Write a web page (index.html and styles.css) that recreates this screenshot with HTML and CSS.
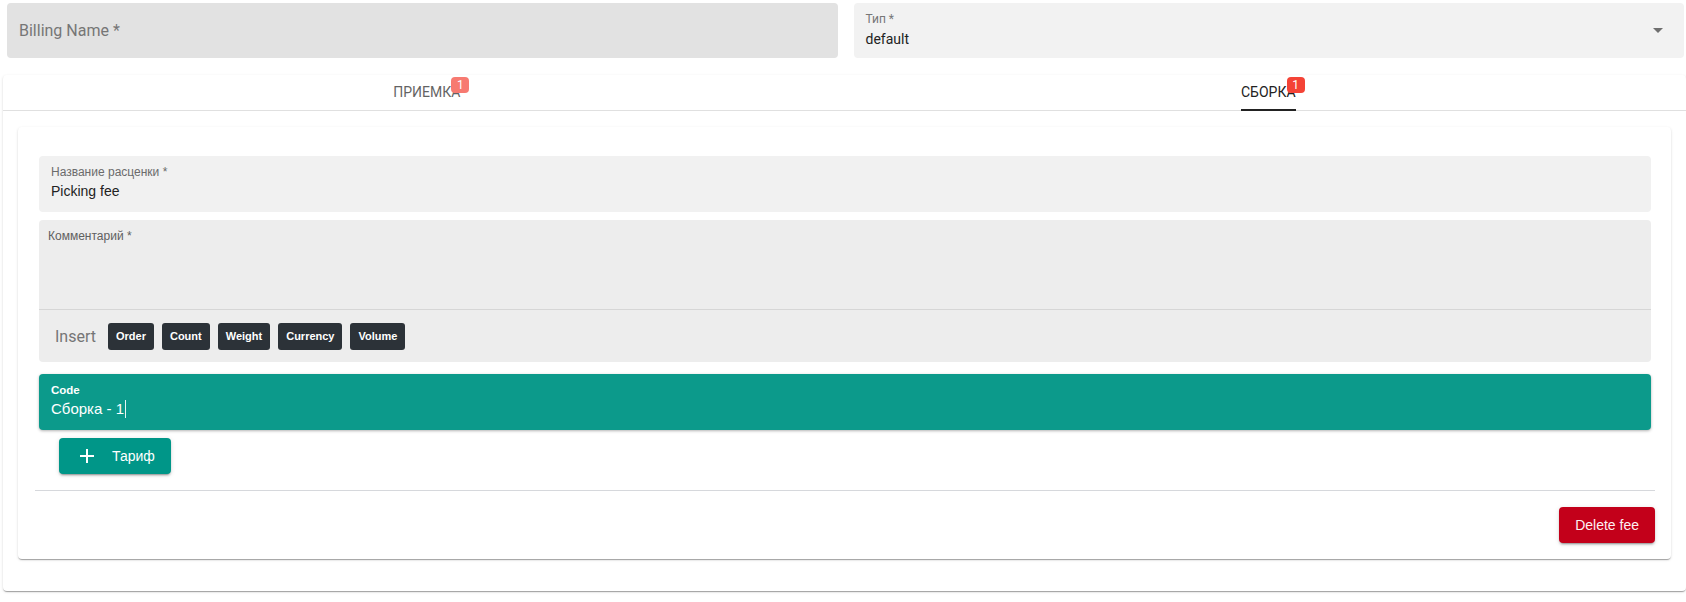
FILE: index.html
```html
<!DOCTYPE html>
<html lang="ru">
<head>
<meta charset="utf-8">
<title>Billing</title>
<link rel="stylesheet" href="styles.css">
</head>
<body>
<div class="page">
  <div class="top-row">
    <div class="field field-billing"><span class="placeholder">Billing Name *</span></div>
    <div class="field field-select">
      <div class="select-text">
        <div class="select-label">Тип *</div>
        <div class="select-value">default</div>
      </div>
      <svg class="select-arrow" width="24" height="24" viewBox="0 0 24 24"><path d="M7 10l5 5 5-5z"/></svg>
    </div>
  </div>

  <div class="outer-card">
    <div class="tabs">
      <div class="tab tab-inactive">
        <div class="tab-inner"><span class="tab-text">ПРИЕМКА<span class="badge">1</span></span></div>
      </div>
      <div class="tab tab-active">
        <div class="tab-inner"><span class="tab-text">СБОРКА<span class="badge">1</span></span></div>
      </div>
    </div>

    <div class="inner-card">
      <div class="fee-fields">
        <div class="text-field">
          <div class="tf-label">Название расценки *</div>
          <div class="tf-value">Picking fee</div>
        </div>

        <div class="comment-field">
          <div class="comment-area">
            <div class="comment-label">Комментарий *</div>
          </div>
          <div class="insert-row">
            <span class="insert-label">Insert</span>
            <span class="chip">Order</span>
            <span class="chip">Count</span>
            <span class="chip">Weight</span>
            <span class="chip">Currency</span>
            <span class="chip">Volume</span>
          </div>
        </div>

        <div class="code-field">
          <div class="code-label">Code</div>
          <div class="code-value">Сборка - 1<span class="caret"></span></div>
        </div>

        <button class="btn-tariff" type="button">
          <svg width="24" height="24" viewBox="0 0 24 24"><path d="M19 13h-6v6h-2v-6H5v-2h6V5h2v6h6v2z"/></svg>
          <span>Тариф</span>
        </button>
      </div>

      <div class="divider"></div>

      <div class="card-footer">
        <button class="btn-delete" type="button">Delete fee</button>
      </div>
    </div>
  </div>
</div>
</body>
</html>
```

FILE: styles.css
```css
* {
  box-sizing: border-box;
}

html,
body {
  margin: 0;
  padding: 0;
  background: #ffffff;
}

body {
  width: 1686px;
  height: 602px;
  overflow: hidden;
  font-family: Roboto, "Liberation Sans", Arial, sans-serif;
  color: #222222;
}

.page {
  padding: 3px 0 0 3px;
}

/* ---------- top row ---------- */
.top-row {
  display: grid;
  grid-template-columns: 1fr 1fr;
  gap: 16px;
  padding: 0 2px 0 4px;
}

.field {
  height: 55px;
  border-radius: 4px;
}

.field-billing {
  display: flex;
  align-items: center;
  padding-left: 12px;
  background: #e2e2e2;
  font-size: 16px;
  color: #767676;
}

.field-select {
  display: flex;
  align-items: flex-start;
  padding: 9px 12px 0 12px;
  background: #f2f2f2;
}

.select-text {
  flex: 1;
}

.select-label {
  font-size: 12px;
  line-height: 14px;
  color: #777777;
}

.select-value {
  margin-top: 4px;
  font-size: 14px;
  line-height: 18px;
  color: #222222;
}

.select-arrow {
  margin-top: 6px;
  margin-right: 2px;
  fill: rgba(0, 0, 0, 0.54);
}

/* ---------- outer card / tabs ---------- */
.outer-card {
  margin-top: 17px;
  padding-bottom: 32px;
  background: #ffffff;
  border-radius: 4px;
  box-shadow: 0 2px 1px -1px rgba(0, 0, 0, 0.2), 0 1px 1px 0 rgba(0, 0, 0, 0.14), 0 1px 3px 0 rgba(0, 0, 0, 0.12);
}

.tabs {
  display: flex;
  height: 36px;
  box-shadow: inset 0 -1px 0 #e0e0e0;
}

.tab {
  flex: 1;
  display: flex;
  justify-content: center;
}

.tab-inner {
  display: flex;
  align-items: center;
  margin-left: 6px;
  border-bottom: 2px solid transparent;
}

.tab-active .tab-inner {
  border-bottom-color: #222222;
}

.tab-inactive .tab-inner {
  opacity: 0.7;
}

.tab-text {
  position: relative;
  font-size: 14px;
  line-height: 16px;
  color: #222222;
}

.badge {
  position: absolute;
  top: 1px;
  right: 0;
  transform: translate(50%, -50%);
  min-width: 18px;
  height: 16px;
  padding: 0 5px;
  border-radius: 4px;
  background: #f44336;
  color: #ffffff;
  font-size: 12px;
  line-height: 16px;
  text-align: center;
}

/* ---------- inner card ---------- */
.inner-card {
  margin: 16px 15px 0 15px;
  padding: 29px 16px 16px 17px;
  background: #ffffff;
  border-radius: 4px;
  box-shadow: 0 2px 1px -1px rgba(0, 0, 0, 0.2), 0 1px 1px 0 rgba(0, 0, 0, 0.14), 0 1px 3px 0 rgba(0, 0, 0, 0.12);
}

.fee-fields {
  display: flex;
  flex-direction: column;
  padding: 0 4px;
}

.text-field {
  height: 56px;
  padding: 9px 12px 0 12px;
  border-radius: 4px;
  background: #f1f1f1;
}

.tf-label {
  font-family: "Liberation Sans", Arial, sans-serif;
  font-size: 12px;
  line-height: 14px;
  color: #6b6b6b;
}

.tf-value {
  margin-top: 3px;
  font-family: "Liberation Sans", Arial, sans-serif;
  font-size: 14px;
  line-height: 18px;
  color: #222222;
}

.comment-field {
  margin-top: 8px;
  border-radius: 4px;
  background: #ededed;
}

.comment-area {
  height: 89px;
  padding: 9px 9px;
}

.comment-label {
  font-family: "Liberation Sans", Arial, sans-serif;
  font-size: 12px;
  line-height: 14px;
  color: #606060;
}

.insert-row {
  display: flex;
  align-items: center;
  gap: 8px;
  height: 53px;
  padding-left: 16px;
  border-top: 1px solid #d6d6d6;
}

.insert-label {
  margin-right: 4px;
  font-size: 16px;
  color: #757575;
}

.chip {
  display: inline-flex;
  align-items: center;
  height: 27px;
  padding: 0 8px;
  border-radius: 3px;
  background: #2c3238;
  color: #ffffff;
  font-family: "Liberation Sans", Arial, sans-serif;
  font-size: 11px;
  font-weight: bold;
}

.code-field {
  margin-top: 12px;
  height: 56px;
  padding: 9px 12px 0 12px;
  border-radius: 4px;
  background: #0c9a8b;
  box-shadow: 0 1px 3px rgba(0, 0, 0, 0.3);
  color: #ffffff;
}

.code-label {
  font-family: "Liberation Sans", Arial, sans-serif;
  font-size: 11.5px;
  font-weight: bold;
  line-height: 14px;
}

.code-value {
  display: flex;
  align-items: center;
  margin-top: 3px;
  font-family: "Liberation Sans", Arial, sans-serif;
  font-size: 15px;
  line-height: 18px;
}

.caret {
  display: inline-block;
  width: 1px;
  height: 18px;
  margin-left: 1px;
  background: rgba(255, 255, 255, 0.9);
}

.btn-tariff {
  align-self: flex-start;
  display: flex;
  align-items: center;
  height: 36px;
  margin-top: 8px;
  margin-left: 20px;
  padding: 0 16px;
  border: none;
  border-radius: 4px;
  background: #009688;
  color: #ffffff;
  font-family: "Liberation Sans", Arial, sans-serif;
  font-size: 14px;
  box-shadow: 0 3px 1px -2px rgba(0, 0, 0, 0.2), 0 2px 2px 0 rgba(0, 0, 0, 0.14), 0 1px 5px 0 rgba(0, 0, 0, 0.12);
}

.btn-tariff svg {
  fill: #ffffff;
  margin-right: 13px;
}

.divider {
  height: 1px;
  margin-top: 16px;
  background: #d6d8dc;
}

.card-footer {
  display: flex;
  justify-content: flex-end;
  margin-top: 16px;
}

.btn-delete {
  height: 36px;
  padding: 0 16px;
  border: none;
  border-radius: 4px;
  background: #c3001a;
  color: #fdf0f2;
  font-family: "Liberation Sans", Arial, sans-serif;
  font-size: 14px;
  box-shadow: 0 3px 1px -2px rgba(0, 0, 0, 0.2), 0 2px 2px 0 rgba(0, 0, 0, 0.14), 0 1px 5px 0 rgba(0, 0, 0, 0.12);
}
```
